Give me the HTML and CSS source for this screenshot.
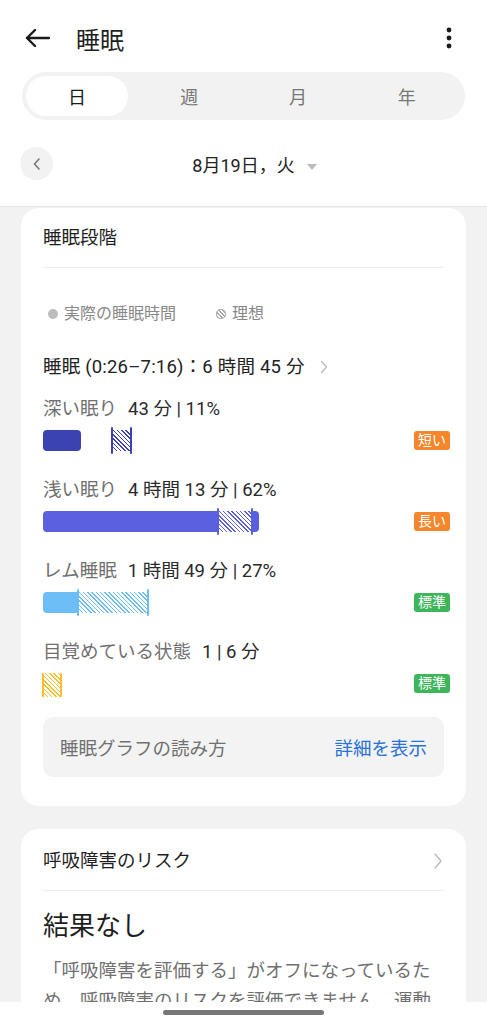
FILE: index.html
```html
<!DOCTYPE html>
<html lang="ja">
<head>
    <meta charset="UTF-8"/>
    <meta name="viewport" content="width=device-width, initial-scale=1.0"/>
    <title>睡眠</title>
    <link rel="stylesheet" href="styles.css">
</head>
<body>
<div id="header">
    <div class="topbar">
        <svg class="back" width="26" height="20" viewBox="0 0 26 20">
            <path d="M25 10H3M11 2L3 10l8 8" fill="none" stroke="#1a1a1a" stroke-width="2.4" stroke-linecap="round" stroke-linejoin="round"/>
        </svg>
        <div class="title">睡眠</div>
        <svg class="more" width="6" height="22" viewBox="0 0 6 22">
            <circle cx="3" cy="3" r="2.4" fill="#1a1a1a"/>
            <circle cx="3" cy="11" r="2.4" fill="#1a1a1a"/>
            <circle cx="3" cy="19" r="2.4" fill="#1a1a1a"/>
        </svg>
    </div>

    <div class="tabs">
        <div class="tab active">日</div>
        <div class="tab">週</div>
        <div class="tab">月</div>
        <div class="tab">年</div>
    </div>

    <div class="date-row">
        <div class="round-btn">
            <svg width="10" height="14" viewBox="0 0 10 14">
                <path d="M7 2L2.5 7 7 12" fill="none" stroke="#777" stroke-width="1.6" stroke-linecap="round" stroke-linejoin="round"/>
            </svg>
        </div>
        <div class="date"><span class="date-text">8月19日，火</span></div>
        <div></div>
    </div>
</div>

<div class="card stages">
    <div class="card-head">睡眠段階</div>

    <div class="legend">
        <span class="legend-item"><i class="dot"></i>実際の睡眠時間</span>
        <span class="legend-item"><i class="dot hatch-dot"></i>理想</span>
    </div>

    <div class="summary">
        睡眠 (0:26–7:16)：6 時間 45 分
        <svg width="10" height="16" viewBox="0 0 10 16">
            <path d="M2.5 2.5L7.5 8l-5 5.5" fill="none" stroke="#bbb" stroke-width="1.4" stroke-linecap="round" stroke-linejoin="round"/>
        </svg>
    </div>

    <div class="stage">
        <div class="stage-label">深い眠り<span class="val">43 分 | 11%</span></div>
        <div class="bar-row">
            <div class="bar deep">
                <span class="seg solid" style="width:38px"></span>
                <span class="gap" style="width:31px"></span>
                <span class="seg hatch" style="width:19px"></span>
            </div>
            <span class="badge orange">短い</span>
        </div>
    </div>

    <div class="stage">
        <div class="stage-label">浅い眠り<span class="val">4 時間 13 分 | 62%</span></div>
        <div class="bar-row">
            <div class="bar light">
                <span class="seg solid first" style="width:175px"></span>
                <span class="seg hatch" style="width:34px"></span>
                <span class="seg solid last" style="width:7px"></span>
            </div>
            <span class="badge orange">長い</span>
        </div>
    </div>

    <div class="stage">
        <div class="stage-label">レム睡眠<span class="val">1 時間 49 分 | 27%</span></div>
        <div class="bar-row">
            <div class="bar rem">
                <span class="seg solid first" style="width:35px"></span>
                <span class="seg hatch" style="width:70px"></span>
            </div>
            <span class="badge green">標準</span>
        </div>
    </div>

    <div class="stage">
        <div class="stage-label">目覚めている状態<span class="val">1 | 6 分</span></div>
        <div class="bar-row">
            <div class="bar awake">
                <span class="seg hatch" style="width:18px"></span>
            </div>
            <span class="badge green">標準</span>
        </div>
    </div>

    <div class="info-box">
        <span>睡眠グラフの読み方</span>
        <span class="link">詳細を表示</span>
    </div>
</div>

<div class="card breath">
    <div class="card-head row">
        <span>呼吸障害のリスク</span>
        <svg width="12" height="20" viewBox="0 0 12 20">
            <path d="M3 3l6 7-6 7" fill="none" stroke="#bbb" stroke-width="1.4" stroke-linecap="round" stroke-linejoin="round"/>
        </svg>
    </div>
    <div class="result">結果なし</div>
    <p class="desc">「呼吸障害を評価する」がオフになっているため、呼吸障害のリスクを評価できません。運動</p>
</div>

<div class="nav-bar"><div class="handle"></div></div>
</body>
</html>
```

FILE: styles.css
```css
body {
    margin: 0;
    padding: 0;
    background-color: #f2f2f2;
    font-family: Roboto, "Noto Sans CJK JP", sans-serif;
    color: #1f1f1f;
    overflow: hidden;
}

#header {
    background-color: #fff;
    border-bottom: 1px solid #e6e6e6;
}

.topbar {
    box-sizing: border-box;
    height: 72px;
    padding: 4px 35px 0 24px;
    display: flex;
    align-items: center;
}

.topbar .title {
    margin-left: 26px;
    font-size: 24px;
    flex: 1;
}

.tabs {
    margin: 0 22px;
    height: 48px;
    box-sizing: border-box;
    padding: 4px;
    border-radius: 24px;
    background-color: #f2f2f2;
    display: flex;
}

.tab {
    flex: 1;
    display: flex;
    align-items: center;
    justify-content: center;
    border-radius: 20px;
    font-size: 18px;
    color: #777;
}

.tab.active {
    background-color: #fff;
    color: #1a1a1a;
    flex: 0 0 102px;
    margin-right: 7px;
}

.date-row {
    display: grid;
    grid-template-columns: 33px 1fr 33px;
    align-items: center;
    padding: 27px 20px 26px;
}

.round-btn {
    width: 33px;
    height: 33px;
    border-radius: 50%;
    background-color: #f2f2f2;
    display: flex;
    align-items: center;
    justify-content: center;
}

.date {
    text-align: center;
    font-size: 18px;
    color: #222;
}

.date-text {
    position: relative;
}

.date-text::after {
    content: "";
    position: absolute;
    left: calc(100% + 12px);
    top: 9px;
    border-left: 5px solid transparent;
    border-right: 5px solid transparent;
    border-top: 6px solid #bbb;
}

.card {
    background-color: #fff;
    margin: 0 21px;
    border-radius: 18px;
    padding: 0 22px;
}

.card.stages {
    margin-top: 1px;
    padding-top: 18px;
    padding-bottom: 29px;
}

.card.breath {
    margin-top: 23px;
    padding-top: 20px;
    padding-bottom: 20px;
}

.card-head {
    font-size: 18.5px;
    line-height: 24px;
    padding-bottom: 17px;
    border-bottom: 1px solid #ececec;
}

.card-head.row {
    display: flex;
    justify-content: space-between;
    align-items: center;
    padding-right: 0;
}

.legend {
    margin-top: 34px;
    display: flex;
    gap: 40px;
    font-size: 16px;
    line-height: 24px;
    color: #888;
    padding-left: 5px;
}

.legend-item {
    display: flex;
    align-items: center;
    gap: 6px;
}

.dot {
    width: 10px;
    height: 10px;
    border-radius: 50%;
    background-color: #bdbdbd;
}

.hatch-dot {
    background: repeating-linear-gradient(45deg, #fff 0 1.5px, #aaa 1.5px 3px);
    box-shadow: 0 0 0 1px #aaa inset;
}

.summary {
    margin-top: 29px;
    font-size: 18.5px;
    line-height: 24px;
    color: #222;
    display: flex;
    align-items: center;
    gap: 14px;
    letter-spacing: 0.2px;
}

.stage {
    margin-top: 18px;
}

.stage + .stage {
    margin-top: 27px;
}

.stage-label {
    font-size: 18.5px;
    line-height: 24px;
    color: #707070;
}

.stage-label .val {
    margin-left: 11px;
    color: #2a2a2a;
}

.bar-row {
    margin-top: 8px;
    display: flex;
    align-items: center;
    justify-content: space-between;
    height: 22px;
}

.bar {
    display: flex;
    height: 21px;
    align-items: stretch;
}

.seg {
    display: block;
}

.deep { --c: #3b43b3; }
.light { --c: #5b60e0; }
.rem { --c: #6dbdf6; }
.awake { --c: #f6c12c; }

.seg.solid {
    background-color: var(--c);
    border-radius: 4px;
}

.seg.first {
    border-radius: 4px 0 0 4px;
}

.seg.last {
    border-radius: 0 4px 4px 0;
}

/* ideal range: hatched fill with edge markers */
.seg.hatch {
    position: relative;
    background: repeating-linear-gradient(45deg, var(--c) 0 1px, #fff 1px 3px);
}

.seg.hatch::before,
.seg.hatch::after {
    content: "";
    position: absolute;
    top: -3px;
    bottom: -3px;
    width: 2px;
    border-radius: 1px;
    background-color: var(--c);
}

.seg.hatch::before {
    left: -1px;
}

.seg.hatch::after {
    right: -1px;
}

.awake .seg.hatch {
    height: 24px;
}

.awake .seg.hatch::before,
.awake .seg.hatch::after {
    top: 0;
    bottom: 0;
}

.badge {
    font-size: 14px;
    line-height: 19px;
    padding: 0 4px;
    border-radius: 3px;
    color: #fff;
    margin-right: -6px;
}

.badge.orange {
    background-color: #f5862b;
}

.badge.green {
    background-color: #3db65b;
}

.info-box {
    margin-top: 23px;
    height: 60px;
    box-sizing: border-box;
    padding: 0 17px;
    border-radius: 10px;
    background-color: #f3f3f3;
    display: flex;
    align-items: center;
    justify-content: space-between;
    font-size: 18.5px;
    color: #707070;
}

.info-box .link {
    color: #2a72d8;
}

.result {
    margin-top: 17px;
    font-size: 26px;
    line-height: 36px;
    color: #1f1f1f;
}

.desc {
    margin: 12px 0 0;
    font-size: 18.5px;
    line-height: 30px;
    color: #707070;
}

.nav-bar {
    position: fixed;
    left: 0;
    right: 0;
    bottom: 0;
    height: 22px;
    background-color: #fff;
    display: flex;
    justify-content: center;
}

.handle {
    margin-top: 8px;
    width: 161px;
    height: 5px;
    border-radius: 3px;
    background-color: #777;
}
```
